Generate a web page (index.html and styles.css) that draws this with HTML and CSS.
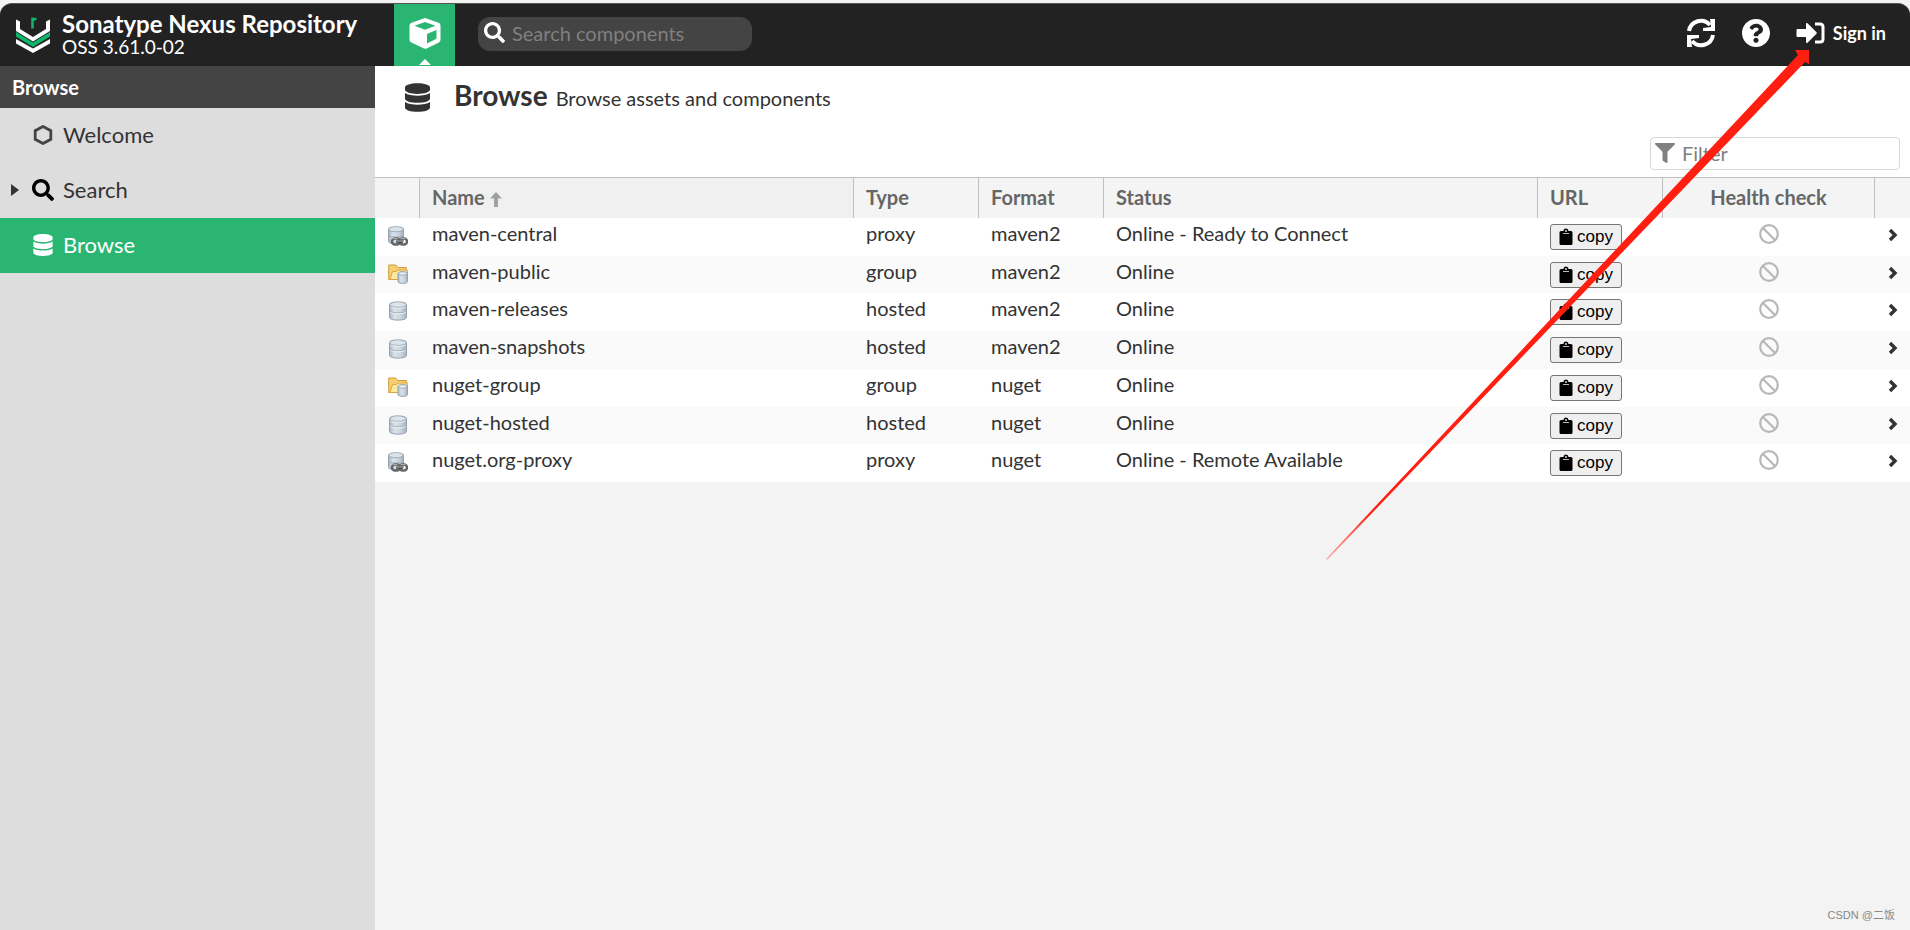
FILE: index.html
```html
<!DOCTYPE html>
<html lang="en">
<head>
<meta charset="utf-8">
<title>Browse - Sonatype Nexus Repository</title>
<link rel="stylesheet" href="styles.css">
</head>
<body>
<svg class="defs" aria-hidden="true">
  <defs>
    <linearGradient id="steel" x1="0" x2="1" y1="0" y2="0">
      <stop offset="0" stop-color="#a9b6c2"/><stop offset=".3" stop-color="#d9e2ea"/><stop offset=".65" stop-color="#cbd5df"/><stop offset="1" stop-color="#a5b1bc"/>
    </linearGradient>
    <linearGradient id="fade" gradientUnits="userSpaceOnUse" x1="1326" y1="560" x2="1370" y2="513">
      <stop offset="0" stop-color="#ff1e10" stop-opacity=".3"/><stop offset="1" stop-color="#ff1e10"/>
    </linearGradient>
    <symbol id="database" viewBox="0 0 448 512"><path d="M448 73.143v45.714C448 159.143 347.667 192 224 192S0 159.143 0 118.857V73.143C0 32.857 100.333 0 224 0s224 32.857 224 73.143zM448 176v102.857C448 319.143 347.667 352 224 352S0 319.143 0 278.857V176c48.125 33.143 136.208 48.572 224 48.572S399.874 209.143 448 176zm0 160v102.857C448 479.143 347.667 512 224 512S0 479.143 0 438.857V336c48.125 33.143 136.208 48.572 224 48.572S399.874 369.143 448 336z"/></symbol>
    <symbol id="search" viewBox="0 0 512 512"><path d="M505 442.700L405.300 343c-4.500-4.500-10.600-7-17-7H372c27.600-35.300 44-79.700 44-128C416 93.100 322.900 0 208 0S0 93.100 0 208s93.100 208 208 208c48.300 0 92.700-16.400 128-44v16.300c0 6.400 2.500 12.500 7 17l99.700 99.700c9.400 9.400 24.600 9.400 33.900 0l28.300-28.300c9.400-9.400 9.400-24.600.1-34zM208 336c-70.700 0-128-57.200-128-128 0-70.700 57.200-128 128-128 70.700 0 128 57.200 128 128 0 70.700-57.200 128-128 128z"/></symbol>
    <symbol id="clipboard" viewBox="0 0 14 18"><path d="M2 3h2.500a2.500 2.500 0 0 1 5 0H12a1.500 1.500 0 0 1 1.500 1.500v11A1.500 1.500 0 0 1 12 17H2a1.500 1.500 0 0 1-1.500-1.500v-11A1.500 1.500 0 0 1 2 3z"/><circle cx="7" cy="3" r=".9" fill="#eee"/><path d="M4 5.500h6" stroke="#bbb"/></symbol>
    <symbol id="ban" viewBox="0 0 20 20"><g fill="none" stroke="#b8b8b8" stroke-width="2.200"><circle cx="10" cy="10" r="8.800"/><path d="M4 4l12 12"/></g></symbol>
    <symbol id="chevron" viewBox="0 0 10 14"><path d="M2 2l5 5-5 5" fill="none" stroke="#333" stroke-width="3.400"/></symbol>
    <symbol id="hosted" viewBox="0 0 20 20"><path d="M1.500 3.500C1.500 0 18.500 0 18.500 3.500v13c0 3.500-17 3.500-17 0z" fill="url(#steel)" stroke="#97a3ae"/><ellipse cx="10" cy="3.800" rx="7.600" ry="2.200" fill="#dce4eb"/><path d="M1.500 4.500c1 2.500 16 2.500 17 0M2 10c1 2.400 15 2.400 16 0" fill="none" stroke="#a0adb9"/><path d="M2.500 11.300c2 2 13 2 15 0M2.500 6c2 1.700 13 1.700 15 0" fill="none" stroke="#eef3f7"/></symbol>
    <symbol id="proxy" viewBox="0 0 20 20"><path d="M.5 3C.5 0 15.500 0 15.500 3v12.500c0 3-15 3-15 0z" fill="url(#steel)" stroke="#97a3ae"/><ellipse cx="8" cy="3.200" rx="6.600" ry="1.900" fill="#dce4eb"/><path d="M.5 4c1 2.300 14 2.300 15 0M1 9.500c1 2 13 2 14 0" fill="none" stroke="#a0adb9"/><g fill="none"><rect x="4" y="12.500" width="8" height="6" rx="3" stroke="#666" stroke-width="2.500"/><rect x="11.500" y="12.500" width="7.500" height="6" rx="3" stroke="#666" stroke-width="2.500"/><path d="M4.500 12.500h5M12.500 12.500h5" stroke="#aaa"/><path d="M8 15.500h7" stroke="#444" stroke-width="2.500"/><path d="M8 15h7" stroke="#bbb"/></g></symbol>
    <symbol id="group" viewBox="0 0 20 20"><path d="M.7 15.500V1h7l2 2.500h8.600v12z" fill="#f5cf73" stroke="#d29a3a"/><path d="M2 15.500l2.500-8h4l1.500-1.500h9.300v9.500z" fill="#fce9a0" stroke="#dba545"/><path d="M10 9.500c0-2.500 9.500-2.500 9.500 0v8c0 2.500-9.500 2.500-9.500 0z" fill="url(#steel)" stroke="#93a1ad"/><path d="M10.500 10c1 1.500 7.500 1.500 8.500 0" fill="none" stroke="#9dabb7"/><ellipse cx="14.700" cy="9.400" rx="3.800" ry="1" fill="#e3eaf0"/></symbol>
  </defs>
</svg>

<header class="topbar">
  <a class="brand" href="#">
    <svg class="logo" viewBox="0 0 34 36" aria-hidden="true">
      <path d="M0 2.500l4 2V12l13 8 13-8V4.500l4-2V14L17 24.500 0 14z" fill="#fff"/>
      <path d="M0 15l17 10.500L34 15v4.500L17 30 0 19.500z" fill="#0db56b"/>
      <path d="M0 22l17 9.500L34 22v4.500L17 36 0 26.500z" fill="#fff"/>
      <path d="M16.500 11.500V.5M16.500 4.500c.3-2 1.500-2.800 4-2.500" fill="none" stroke="#0db56b" stroke-width="2.600"/>
    </svg>
    <span class="brand-text"><strong>Sonatype Nexus Repository</strong><span>OSS 3.61.0-02</span></span>
  </a>
  <button class="mode" aria-label="Browse server contents">
    <svg class="cube" viewBox="0 0 32 32" aria-hidden="true"><path fill-rule="evenodd" fill="#fff" d="M16 1q.7 0 1.500.4l12 4.300q2 .8 2 2.800v14.300q0 1.800-1.600 2.600l-12.200 6Q16 32 14.400 31.300L2 25.300Q.5 24.500.5 22.700V8.500q0-2 2-2.800l12-4.300Q15.300 1 16 1zM16 5L5.500 8.800 16 12.700l10.500-3.900zM18 17v9.500l9.500-4.700V13z"/></svg>
    <span class="notch"></span>
  </button>
  <label class="top-search">
    <svg class="icon-21" aria-hidden="true"><use href="#search"/></svg>
    <input type="search" placeholder="Search components" aria-label="Search components">
  </label>
  <nav class="actions" aria-label="User">
    <button aria-label="Refresh"><svg class="icon-30" viewBox="0 0 30 30" aria-hidden="true"><g fill="none" stroke="#fff" stroke-width="4"><path d="M3 13a12 12 0 0 1 21-6"/><path d="M27 17a12 12 0 0 1-21 6"/></g><path fill="#fff" d="M29 1v12H17v-3l8-1-1-8zM1 29V17h12v3l-8 1 1 8z"/></svg></button>
    <button aria-label="Help"><svg class="icon-28" viewBox="8 8 496 496" aria-hidden="true"><path fill="#fff" d="M504 256c0 136.997-111.043 248-248 248S8 392.997 8 256C8 119.083 119.043 8 256 8s248 111.083 248 248zM262.655 90c-54.497 0-89.255 22.957-116.549 63.758-3.536 5.286-2.353 12.415 2.715 16.258l34.699 26.310c5.205 3.947 12.621 3.008 16.665-2.122 17.864-22.658 30.113-35.797 57.303-35.797 20.429 0 45.698 13.148 45.698 32.958 0 14.976-12.363 22.667-32.534 33.976C247.128 238.528 216 254.941 216 296v4c0 6.627 5.373 12 12 12h56c6.627 0 12-5.373 12-12v-1.333c0-28.462 83.186-29.647 83.186-106.667 0-58.002-60.165-102-116.531-102zM256 338c-25.365 0-46 20.635-46 46 0 25.364 20.635 46 46 46s46-20.636 46-46c0-25.365-20.635-46-46-46z"/></svg></button>
    <button class="signin"><svg class="signin-icon" viewBox="0 0 29 22" aria-hidden="true"><path fill="#fff" d="M1.500 7H10V2q0-1.500 1.500-.8l9 9q.8.8 0 1.600l-9 9Q10 21.500 10 20v-5H1.500Q.5 15 .5 14V8q0-1 1-1z"/><path d="M19 2h5q3 0 3 3v12q0 3-3 3h-5" fill="none" stroke="#fff" stroke-width="3"/></svg>Sign in</button>
  </nav>
</header>

<div class="body">
  <aside class="sidebar">
    <h2>Browse</h2>
    <ul>
      <li><a href="#"><svg class="hex" viewBox="0 0 20 20" aria-hidden="true"><path d="M10 1.500l7.800 4.200v8.600L10 18.500l-7.800-4.200V5.700z" fill="none" stroke="#444" stroke-width="2.800"/></svg>Welcome</a></li>
      <li class="parent"><a href="#"><svg class="icon-22" aria-hidden="true"><use href="#search"/></svg>Search</a></li>
      <li class="active"><a href="#" aria-current="page"><svg class="icon-22" aria-hidden="true"><use href="#database"/></svg>Browse</a></li>
    </ul>
  </aside>

  <main class="content">
    <div class="heading">
      <svg class="heading-icon" aria-hidden="true"><use href="#database"/></svg>
      <h1>Browse</h1><span>Browse assets and components</span>
    </div>
    <div class="toolbar">
      <label class="filter">
        <svg class="icon-20" viewBox="0 0 512 512" aria-hidden="true"><path fill="#808080" d="M487.976 0H24.028C2.710 0-8.047 25.866 7.058 40.971L192 225.941V432c0 7.831 3.821 15.170 10.237 19.662l80 55.980C298.020 518.690 320 507.493 320 487.980V225.941l184.947-184.970C520.021 25.896 509.338 0 487.976 0z"/></svg>
        <input type="text" placeholder="Filter" aria-label="Filter">
      </label>
    </div>
    <table class="grid">
      <colgroup><col class="c-icon"><col><col class="c-small"><col class="c-small"><col><col class="c-small"><col class="c-health"><col class="c-go"></colgroup>
      <thead><tr><th aria-label="Kind"></th><th class="sorted" aria-sort="ascending">Name <svg class="sort" viewBox="0 0 12 15" aria-hidden="true"><path d="M6 0l6 6.500H8V15H4V6.500H0z" fill="#a0a0a0"/></svg></th><th>Type</th><th>Format</th><th>Status</th><th>URL</th><th class="center">Health check</th><th aria-label="Open"></th></tr></thead>
      <tbody>
        <tr><td><svg class="kind"><use href="#proxy"/></svg></td><td>maven-central</td><td>proxy</td><td>maven2</td><td>Online - Ready to Connect</td><td><button class="copy"><svg class="clip"><use href="#clipboard"/></svg>copy</button></td><td><svg class="ban"><use href="#ban"/></svg></td><td><svg class="go"><use href="#chevron"/></svg></td></tr>
        <tr><td><svg class="kind"><use href="#group"/></svg></td><td>maven-public</td><td>group</td><td>maven2</td><td>Online</td><td><button class="copy"><svg class="clip"><use href="#clipboard"/></svg>copy</button></td><td><svg class="ban"><use href="#ban"/></svg></td><td><svg class="go"><use href="#chevron"/></svg></td></tr>
        <tr><td><svg class="kind"><use href="#hosted"/></svg></td><td>maven-releases</td><td>hosted</td><td>maven2</td><td>Online</td><td><button class="copy"><svg class="clip"><use href="#clipboard"/></svg>copy</button></td><td><svg class="ban"><use href="#ban"/></svg></td><td><svg class="go"><use href="#chevron"/></svg></td></tr>
        <tr><td><svg class="kind"><use href="#hosted"/></svg></td><td>maven-snapshots</td><td>hosted</td><td>maven2</td><td>Online</td><td><button class="copy"><svg class="clip"><use href="#clipboard"/></svg>copy</button></td><td><svg class="ban"><use href="#ban"/></svg></td><td><svg class="go"><use href="#chevron"/></svg></td></tr>
        <tr><td><svg class="kind"><use href="#group"/></svg></td><td>nuget-group</td><td>group</td><td>nuget</td><td>Online</td><td><button class="copy"><svg class="clip"><use href="#clipboard"/></svg>copy</button></td><td><svg class="ban"><use href="#ban"/></svg></td><td><svg class="go"><use href="#chevron"/></svg></td></tr>
        <tr><td><svg class="kind"><use href="#hosted"/></svg></td><td>nuget-hosted</td><td>hosted</td><td>nuget</td><td>Online</td><td><button class="copy"><svg class="clip"><use href="#clipboard"/></svg>copy</button></td><td><svg class="ban"><use href="#ban"/></svg></td><td><svg class="go"><use href="#chevron"/></svg></td></tr>
        <tr><td><svg class="kind"><use href="#proxy"/></svg></td><td>nuget.org-proxy</td><td>proxy</td><td>nuget</td><td>Online - Remote Available</td><td><button class="copy"><svg class="clip"><use href="#clipboard"/></svg>copy</button></td><td><svg class="ban"><use href="#ban"/></svg></td><td><svg class="go"><use href="#chevron"/></svg></td></tr>
      </tbody>
    </table>
  </main>
</div>
<svg class="pointer" viewBox="1326 50 483 510" aria-hidden="true"><path fill="url(#fade)" d="M1327 560l-1-1L1798 55l-3-5h14v14l-4-2z"/></svg>
<span class="watermark">CSDN @二饭</span>
</body>
</html>
```

FILE: styles.css
```css
* { box-sizing: border-box; }

body {
  position: relative;
  display: flex;
  flex-direction: column;
  min-height: 100vh;
  margin: 0;
  padding-top: 3px;
  background: #f3f3f3;
  color: #333;
  font: 20px/26px Lato, "Noto Sans CJK SC", sans-serif;
}

button { border: 0; padding: 0; background: none; color: inherit; font: inherit; }
input { border: 0; padding: 0; min-width: 0; flex: 1; background: none; color: inherit; font: inherit; outline: 0; }
a { color: inherit; text-decoration: none; }
svg { flex: none; }
.defs { position: absolute; width: 0; height: 0; }

.icon-20 { width: 20px; height: 20px; }
.icon-21 { width: 21px; height: 21px; }
.icon-22 { width: 22px; height: 22px; }
.icon-28 { width: 28px; height: 28px; }
.icon-30 { width: 30px; height: 30px; }

/* Top bar */
.topbar {
  display: flex;
  height: 63px;
  border-top: 1px solid #555;
  border-radius: 12px 12px 0 0;
  background: #222;
  color: #fff;
}
.brand { display: flex; width: 394px; padding: 7px 0 0 16px; gap: 12px; }
.logo { width: 34px; height: 36px; margin-top: 6px; }
.brand-text { display: flex; flex-direction: column; font-size: 19px; line-height: 20px; }
.brand-text strong { font-size: 24px; line-height: 26px; }
.mode {
  display: flex;
  flex-direction: column;
  align-items: center;
  justify-content: space-between;
  width: 61px;
  padding: 13px 0 1px;
  background: #2ab573;
}
.cube { width: 32px; height: 32px; }
.notch { border: 6px solid transparent; border-top: 0; border-bottom-color: #fff; }
.top-search {
  display: flex;
  align-items: center;
  align-self: flex-start;
  gap: 7px;
  width: 274px;
  height: 34px;
  margin: 13px 0 0 23px;
  padding: 0 12px 3px 6px;
  border-radius: 12px;
  background: #444;
  fill: #fff;
}
.top-search input::placeholder { color: #808080; opacity: 1; }
.actions { display: flex; align-items: center; margin-left: auto; padding: 0 24px 4px 0; gap: 26px; }
.actions button { display: flex; align-items: center; }
.actions .signin { gap: 8px; font-size: 18px; font-weight: 700; }
.signin-icon { width: 29px; height: 22px; }

.body { display: flex; flex: 1; }

/* Sidebar */
.sidebar { width: 375px; flex: none; background: #ddd; }
.sidebar h2 { margin: 0; padding: 8px 12px; background: #444; color: #fff; font-size: 20px; line-height: 26px; }
.sidebar ul { margin: 0; padding: 0; list-style: none; }
.sidebar li { display: flex; height: 55px; padding: 0 0 2px 32px; font-size: 22px; }
.sidebar a { display: flex; flex: 1; align-items: center; gap: 9px; }
.hex { width: 22px; height: 20px; }
.sidebar .parent { padding-left: 11px; align-items: center; gap: 13px; }
.parent::before { content: ""; border: 6px solid transparent; border-left: 8px solid #333; border-right: 0; }
.active { background: #2ab573; color: #fff; fill: #fff; }

/* Content */
.content { flex: 1; min-width: 0; }
.heading, .toolbar { display: flex; background: #fff; }
.heading { align-items: baseline; height: 66px; padding: 14px 30px 0; }
.heading-icon { width: 25px; height: 29px; margin-right: 24px; align-self: flex-start; margin-top: 3px; fill: #333; }
.heading h1 { margin: 0 8px 0 0; font-size: 28px; line-height: 30px; }
.toolbar { justify-content: flex-end; padding: 5px 10px 7px; }
.filter {
  display: flex;
  align-items: center;
  gap: 7px;
  width: 250px;
  height: 33px;
  padding: 0 5px 2px 4px;
  border: 1px solid #d8d8d8;
  border-radius: 4px;
}
.filter input::placeholder { color: #808080; opacity: 1; }

.grid { width: 100%; table-layout: fixed; border-collapse: separate; border-spacing: 0; }
.c-icon { width: 45px; }
.c-small { width: 125px; }
.c-health { width: 212px; }
.c-go { width: 35px; }
.grid th { height: 41px; padding: 0 12px 2px; border-top: 1px solid #c0c0c0; border-right: 1px solid #c0c0c0; background: #f4f4f4; color: #666; font-size: 20px; text-align: left; white-space: nowrap; }
.grid th:last-child { border-right: 0; }
.grid .sorted { background: #f0f0f0; }
.grid .center { text-align: center; }
.sort { width: 12px; height: 15px; vertical-align: -2px; }
.grid tbody tr { height: 38px; background: #fff; }
.grid tbody tr:nth-child(even) { background: #fafafa; }
.grid tbody tr:nth-child(4n + 2) { height: 37px; }
.grid td { padding: 2px 12px 0; vertical-align: top; line-height: 26px; white-space: nowrap; }
.kind { display: block; width: 20px; height: 20px; margin: 6px 0 0 1px; }
.ban { display: block; width: 20px; height: 20px; margin: 4px auto 0; }
.go { display: block; width: 10px; height: 14px; margin: 8px 0 0 1px; }
.copy {
  display: flex;
  align-items: center;
  gap: 4px;
  height: 26px;
  margin-top: 4px;
  padding: 0 8px;
  border: 1px solid #767676;
  border-radius: 3px;
  background: #efefef;
  color: #000;
  font: 17px/20px "Liberation Sans", sans-serif;
}
.clip { width: 14px; height: 18px; }

/* Overlays */
.pointer { position: absolute; top: 50px; right: 101px; width: 483px; height: 510px; pointer-events: none; }
.watermark { position: absolute; right: 15px; bottom: 5px; color: #888; font: 11px/20px "Liberation Sans", "Noto Sans CJK SC", sans-serif; }
```
